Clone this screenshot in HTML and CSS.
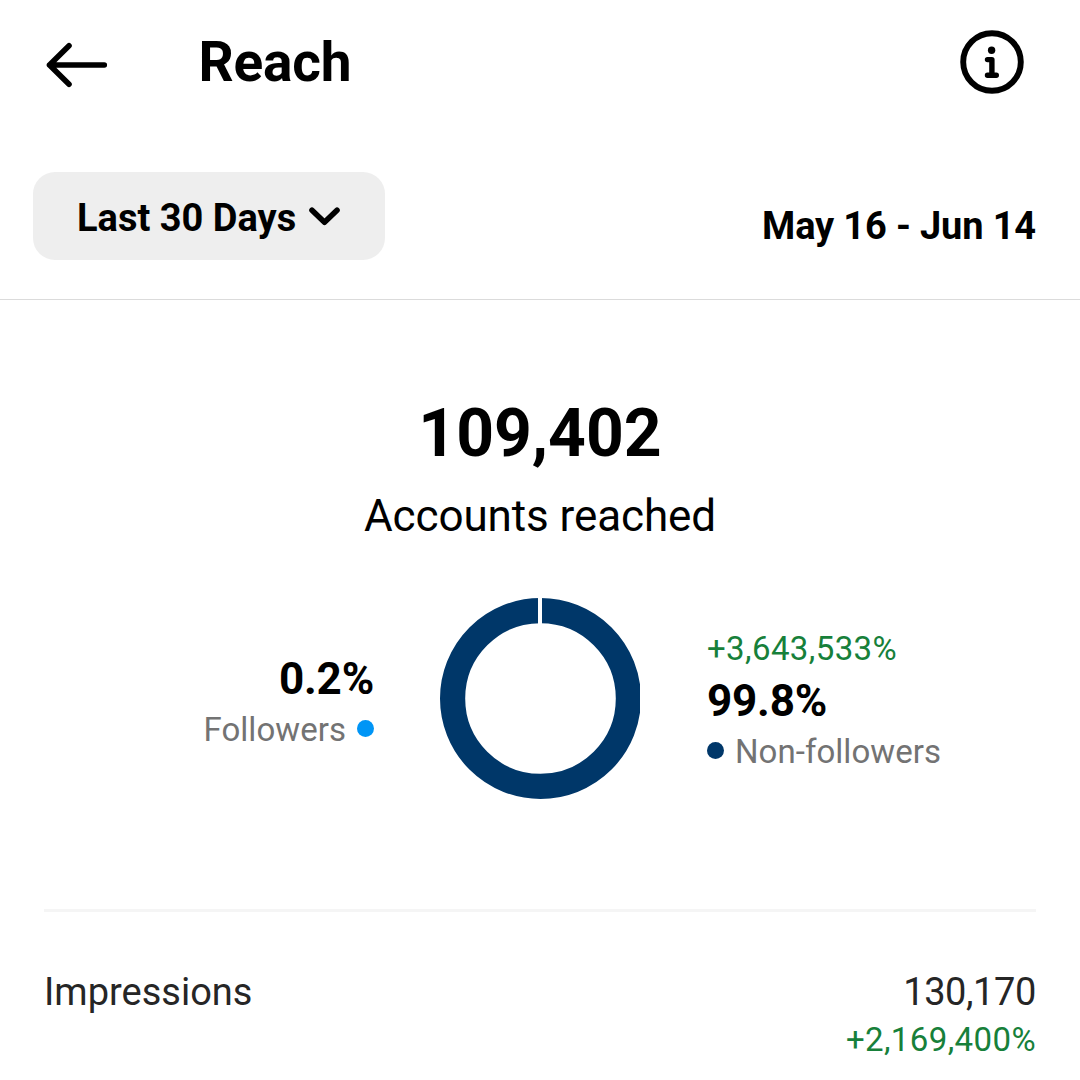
FILE: index.html
```html
<!DOCTYPE html>
<html lang="en">
<head>
<meta charset="utf-8">
<title>Reach</title>
<link rel="stylesheet" href="styles.css">
</head>
<body>
<header class="header">
  <svg class="back" width="64" height="48" viewBox="0 0 64 48"><path d="M60.300 24H5.500M25 4.700L5.500 24L25 43.300" fill="none" stroke="#000" stroke-width="5.600" stroke-linecap="round" stroke-linejoin="round"/></svg>
  <h1 class="title">Reach</h1>
  <svg class="info" width="64" height="64" viewBox="0 0 64 64"><circle cx="32" cy="32" r="28.800" fill="none" stroke="#000" stroke-width="5.900"/><circle cx="31.600" cy="20.200" r="3.700"/><path d="M27.500 29.600H31.900V45M27.500 45.200H36.300" fill="none" stroke="#000" stroke-width="5.400" stroke-linecap="round" stroke-linejoin="round"/></svg>
</header>
<section class="filters">
  <button class="range"><span class="range-text">Last 30 Days</span><svg class="chevron" width="32" height="20" viewBox="0 0 32 20"><path d="M4 3.200L16.500 15.200L29 3.200" fill="none" stroke="#000" stroke-width="5.600" stroke-linecap="round" stroke-linejoin="round"/></svg></button>
  <div class="dates"><span class="dates-text">May 16 - Jun 14</span></div>
</section>
<main class="content">
  <div class="total"><span class="total-text">109,402</span></div>
  <div class="caption"><span class="caption-text">Accounts reached</span></div>
  <section class="breakdown">
    <div class="side followers">
      <div class="percent"><span>0.2%</span></div>
      <div class="legend"><span>Followers</span><i class="dot light"></i></div>
    </div>
    <svg class="donut" width="200" height="201" viewBox="0 0 200 201"><circle cx="100.500" cy="100.500" r="87.900" fill="none" stroke="#003769" stroke-width="25.200"/><path d="M98 0h4v30h-4z" fill="#fff"/></svg>
    <div class="side others">
      <div class="change"><span>+3,643,533%</span></div>
      <div class="percent"><span>99.8%</span></div>
      <div class="legend"><i class="dot dark"></i><span>Non-followers</span></div>
    </div>
  </section>
  <section class="impressions">
    <span class="metric">Impressions</span>
    <div class="values">
      <div class="metric count"><span>130,170</span></div>
      <div class="change"><span>+2,169,400%</span></div>
    </div>
  </section>
</main>
</body>
</html>
```
FILE: styles.css
```css
* { box-sizing: border-box; }
body { margin: 0; height: 1080px; overflow: hidden; background: #fff; color: #000; font-family: Roboto, "Liberation Sans", sans-serif; }
svg { display: block; flex: none; }
.header { display: flex; align-items: flex-start; height: 172px; padding: 30px 56px 0 44px; }
.back { margin-top: 11px; }
.title { flex: 1; margin: 0 0 0 90.5px; font-size: 55px; line-height: 64px; font-weight: 700; letter-spacing: -0.2px; }
.filters { display: flex; justify-content: space-between; align-items: flex-start; height: 128px; padding: 0 44px 0 33px; border-bottom: 1px solid #dbdbdb; }
.range { display: flex; align-items: flex-start; width: 352px; height: 88px; padding: 24px 0 0 44px; border: 0; border-radius: 22px; background: #eee; color: #000; font: 700 38px/44px Roboto, "Liberation Sans", sans-serif; white-space: nowrap; }
.chevron { margin: 11px 0 0 12px; }
.dates { margin-top: 32px; font-size: 38px; line-height: 44px; font-weight: 700; letter-spacing: -0.15px; }
.content { padding: 95px 44px 0; }
.total { text-align: center; font-size: 66px; line-height: 78px; font-weight: 700; }
.caption { margin-top: 17px; text-align: center; font-size: 44px; line-height: 52px; letter-spacing: -0.1px; }
.breakdown { display: flex; align-items: flex-start; height: 370px; padding-top: 56px; border-bottom: 3px solid #f5f5f5; }
.side { display: flex; flex-direction: column; }
.followers { width: 330px; margin: 55px 66px 0 0; align-items: flex-end; }
.followers .legend { margin-top: 5px; }
.others { margin: 31px 0 0 67px; align-items: flex-start; }
.others .percent { margin-top: 6px; }
.others .legend { margin-top: 5px; }
.percent { font-size: 44px; line-height: 52px; font-weight: 700; letter-spacing: -0.2px; }
.legend { display: flex; align-items: center; gap: 11px; font-size: 33px; line-height: 40px; color: #737373; letter-spacing: 0.05px; }
.dot { width: 17px; height: 17px; margin-bottom: 4px; border-radius: 50%; }
.light { background: #0095f6; }
.dark { background: #003769; }
.change { font-size: 33px; line-height: 40px; color: #17803a; letter-spacing: 0.4px; }
.impressions { display: flex; justify-content: space-between; align-items: flex-start; padding-top: 57px; }
.metric { font-size: 38px; line-height: 46px; color: #262626; }
.count { letter-spacing: -0.4px; }
.values { display: flex; flex-direction: column; align-items: flex-end; }
.values .change { margin-top: 5px; }
```
